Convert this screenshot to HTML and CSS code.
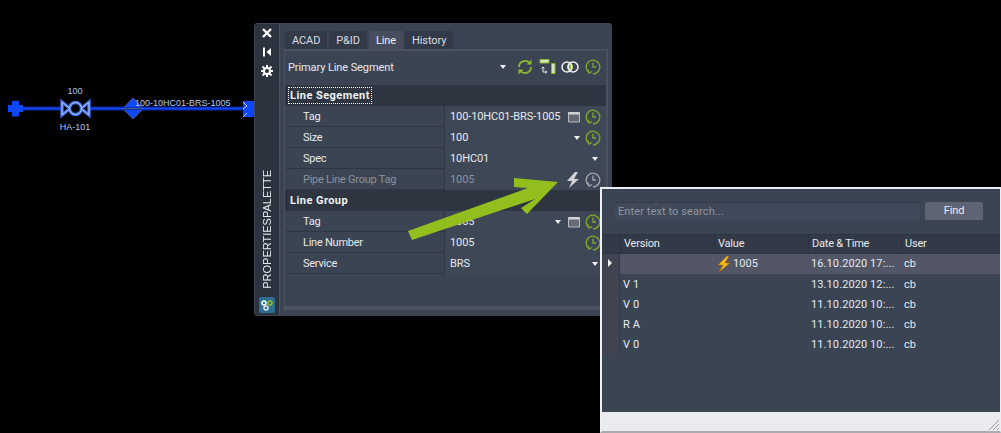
FILE: index.html
```html
<!DOCTYPE html>
<html lang="en">
<head>
    <meta charset="UTF-8">
    <title>Properties palette</title>
    <link rel="stylesheet" href="styles.css">
</head>
<body>
    <svg class="diagram" width="254" height="70" viewBox="0 70 254 70">
        <defs>
            <filter id="glow" x="-30%" y="-30%" width="160%" height="160%"><feGaussianBlur stdDeviation="0.6"/></filter>
        </defs>
        <path d="M8 108.500H254" stroke="#0a2aa0" stroke-width="4"/>
        <path d="M8 108.500H254" stroke="#1548ff" stroke-width="1.500"/>
        <path d="M12 101h7v4h4v7h-4v4.500h-7V112H8v-7h4z" fill="#0f47ff"/>
        <g fill="#000" stroke="#3a6ae6" stroke-width="3.400" filter="url(#glow)"><path d="M62 102l8 6.500-8 6.500zM89 102l-8 6.500 8 6.500z"/><circle cx="75.500" cy="108.500" r="6"/></g>
        <g fill="none" stroke="#b9ccff" stroke-width="1"><path d="M62 102l8 6.500-8 6.500zM89 102l-8 6.500 8 6.500z"/><circle cx="75.500" cy="108.500" r="6"/></g>
        <path d="M133 98l9 9h-18zM124 110h18l-9 9z" fill="#0f47ff"/>
        <path d="M124 107.500l9-9.500 9 9.500M124 109.500l9 9.500 9-9.500M124 108.500h18" fill="none" stroke="#4a5a8a" stroke-width="1"/>
        <path d="M243 101h11v16h-11z" fill="#0f47ff"/>
        <path d="M243 102l4 4-4 3M243 117l4-4" fill="none" stroke="#c8d6f6" stroke-width="1"/>
        <text class="dia-text" x="75" y="94" text-anchor="middle">100</text>
        <text class="dia-text" x="75" y="130" text-anchor="middle">HA-101</text>
        <text class="dia-text" x="135" y="106">100-10HC01-BRS-1005</text>
    </svg>

    <div class="palette">
        <div class="strip">
            <div class="strip-tools">
                <svg width="12" height="12" viewBox="0 0 12 12"><path d="M2 2l8 8M10 2l-8 8" stroke="#fff" stroke-width="2.400"/></svg>
                <svg width="12" height="12" viewBox="0 0 12 12"><path d="M3 1.500v9" stroke="#fff" stroke-width="2"/><path d="M10 2v8L5.500 6z" fill="#fff"/></svg>
                <svg width="12" height="12" viewBox="0 0 12 12"><path d="M6 0v12M0 6h12M1.500 1.500l9 9M10.500 1.500l-9 9" stroke="#fff" stroke-width="2"/><circle cx="6" cy="6" r="4" fill="#fff"/><circle cx="6" cy="6" r="2" fill="#2c333f"/></svg>
            </div>
            <div class="strip-title">PROPERTIESPALETTE</div>
            <div class="strip-logo">
                <svg width="16" height="16" viewBox="0 0 16 16"><circle cx="5" cy="6" r="2" fill="none" stroke="#fff" stroke-width="1.500"/><circle cx="11" cy="6" r="2" fill="none" stroke="#93bf1e" stroke-width="1.500"/><circle cx="7" cy="11" r="2" fill="none" stroke="#e8e8e8" stroke-width="1.500"/></svg>
            </div>
        </div>
        <div class="main">
            <div class="tabs">
                <div class="tab">ACAD</div>
                <div class="tab">P&amp;ID</div>
                <div class="tab tab-on">Line</div>
                <div class="tab">History</div>
            </div>
            <div class="body">
                <div class="toolbar">
                    <div class="select-box">
                        <span>Primary Line Segment</span>
                        <span class="caret"></span>
                    </div>
                    <svg class="tool" width="18" height="18" viewBox="0 0 18 18"><path d="M3 9a6 6 0 0 1 10.500-4M15 9a6 6 0 0 1-10.500 4" fill="none" stroke="#8cb82b" stroke-width="1.800"/><path d="M15.500 1.500v5h-5zM2.500 16.500v-5h5z" fill="#8cb82b"/></svg>
                    <svg class="tool" width="17" height="18" viewBox="0 0 17 18"><path d="M1 1.500h9v3.500H1z" fill="#d5e3c8" stroke="#8cb82b"/><path d="M12.500 5.500h3.500v10h-3.500z" fill="#d5e3c8" stroke="#8cb82b"/><path d="M4 9v5h4M2.500 10.500L4 9l1.500 1.500M6.500 12.500L8 14l-1.500 1.500" fill="none" stroke="#e8e8e8"/></svg>
                    <svg class="tool" width="18" height="18" viewBox="0 0 18 18"><path d="M9 4.500a5 5 0 0 1 0 9 5 5 0 0 1 0-9z" fill="#8cb82b"/><circle cx="6" cy="9" r="5" fill="none" stroke="#f0f0f0" stroke-width="1.500"/><circle cx="12" cy="9" r="5" fill="none" stroke="#f0f0f0" stroke-width="1.500"/></svg>
                    <svg class="tool tool-last" width="16" height="18" viewBox="0 0 16 18"><use href="#clock"/></svg>
                </div>

                <div class="section"><span class="focus">Line Segement</span></div>
                <div class="row"><div class="cell-name">Tag</div><div class="cell-val"><span class="val-text">100-10HC01-BRS-1005</span>
                    <svg class="win" width="12" height="12" viewBox="0 0 12 12"><path d="M.5 1.500h11v9.500H.5z" fill="#656b76" stroke="#b9bcc2"/><path d="M.5 1h11v2.500H.5z" fill="#d0d2d6"/></svg>
                    <svg class="clock" width="16" height="18" viewBox="0 0 16 18"><use href="#clock"/></svg></div></div>
                <div class="row"><div class="cell-name">Size</div><div class="cell-val"><span class="val-text">100</span><span class="caret"></span>
                    <svg class="clock" width="16" height="18" viewBox="0 0 16 18"><use href="#clock"/></svg></div></div>
                <div class="row"><div class="cell-name">Spec</div><div class="cell-val"><span class="val-text">10HC01</span><span class="caret caret-end"></span></div></div>
                <div class="row row-off"><div class="cell-name">Pipe Line Group Tag</div><div class="cell-val"><span class="val-text">1005</span>
                    <svg class="bolt" width="14" height="18" viewBox="0 0 14 18"><path d="M9 1L1 10h5l-3 7 10-9H8l4-7z" fill="#cfd2d6"/></svg>
                    <svg class="clock" width="16" height="18" viewBox="0 0 16 18"><use href="#clock-off"/></svg></div></div>

                <div class="section">Line Group</div>
                <div class="row"><div class="cell-name">Tag</div><div class="cell-val"><span class="val-text">1005</span><span class="caret"></span>
                    <svg class="win" width="12" height="12" viewBox="0 0 12 12"><path d="M.5 1.500h11v9.500H.5z" fill="#656b76" stroke="#b9bcc2"/><path d="M.5 1h11v2.500H.5z" fill="#d0d2d6"/></svg>
                    <svg class="clock" width="16" height="18" viewBox="0 0 16 18"><use href="#clock"/></svg></div></div>
                <div class="row"><div class="cell-name">Line Number</div><div class="cell-val"><span class="val-text">1005</span>
                    <svg class="clock" width="16" height="18" viewBox="0 0 16 18"><use href="#clock"/></svg></div></div>
                <div class="row"><div class="cell-name">Service</div><div class="cell-val"><span class="val-text">BRS</span><span class="caret caret-end"></span></div></div>
            </div>
        </div>
    </div>

    <svg class="arrow" width="160" height="72" viewBox="0 0 160 72"><path d="M8 61L128 18l-14-1V8l44 4-31 32-6-6 14-9L12 70z" fill="#93bf1e"/></svg>

    <div class="history">
        <div class="search">
            <div class="search-input">Enter text to search...</div>
            <div class="find">Find</div>
        </div>
        <div class="grid">
            <div class="grid-row grid-head">
                <div class="gutter"></div><div>Version</div><div>Value</div><div>Date &amp; Time</div><div>User</div>
            </div>
            <div class="grid-row grid-on">
                <div class="gutter"><span class="pointer"></span></div><div></div>
                <div class="val-bolt"><svg width="14" height="16" viewBox="0 0 14 16"><path d="M10 0L1 9h5l-4 7 11-9H8l4-7z" fill="#f7b90f" stroke="#a8560c" stroke-width=".5"/></svg>1005</div>
                <div>16.10.2020 17:...</div><div>cb</div>
            </div>
            <div class="grid-row"><div class="gutter"></div><div>V 1</div><div></div><div>13.10.2020 12:...</div><div>cb</div></div>
            <div class="grid-row"><div class="gutter"></div><div>V 0</div><div></div><div>11.10.2020 10:...</div><div>cb</div></div>
            <div class="grid-row"><div class="gutter"></div><div>R A</div><div></div><div>11.10.2020 10:...</div><div>cb</div></div>
            <div class="grid-row"><div class="gutter"></div><div>V 0</div><div></div><div>11.10.2020 10:...</div><div>cb</div></div>
        </div>
        <div class="status">
            <svg width="12" height="12" viewBox="0 0 12 12"><path d="M1 11L11 1M5 11l6-6M9 11l2-2" stroke="#9a9da3" stroke-width="1"/></svg>
        </div>
    </div>

    <svg width="0" height="0" class="defs">
        <defs>
            <g id="clock" fill="none" stroke="#7fa82b" stroke-width="1.300"><path d="M4 14.500a6.800 6.800 0 1 1 4 1.300"/><path d="M8 4.500V9h3"/><path d="M3 11.500l1 3.500 3.200-1.500"/></g>
            <g id="clock-off" fill="none" stroke="#a3a7ad" stroke-width="1.300"><path d="M4 14.500a6.800 6.800 0 1 1 4 1.300"/><path d="M8 4.500V9h3"/><path d="M3 11.500l1 3.500 3.200-1.500"/></g>
        </defs>
    </svg>
</body>
</html>
```

FILE: styles.css
```css
html, body {
    margin: 0;
    height: 433px;
    overflow: hidden;
    background: #000;
}
body {
    position: relative;
    font-family: Roboto, "Liberation Sans", Arial, sans-serif;
    font-size: 11px;
    letter-spacing: -0.1px;
    color: #e6e9ee;
}
.defs {
    position: absolute;
}
.diagram {
    position: absolute;
    left: 0;
    top: 70px;
}
.dia-text {
    font-family: "Liberation Sans", Arial, sans-serif;
    font-size: 9px;
    letter-spacing: 0;
    fill: #b7c8f2;
}

/* palette window */
.palette {
    position: absolute;
    left: 254px;
    top: 23px;
    width: 358px;
    height: 293px;
    display: flex;
    background: #2c333f;
    border-radius: 3px;
    box-sizing: border-box;
    border: 1px solid #3d4552;
}
.strip {
    width: 24px;
    display: flex;
    flex-direction: column;
    align-items: center;
    padding: 3px 0 2px;
    background: #2c333f;
}
.strip-tools {
    display: flex;
    flex-direction: column;
    gap: 7px;
}
.strip-tools svg {
    display: block;
}
.strip-title {
    margin-top: auto;
    writing-mode: vertical-rl;
    transform: rotate(180deg);
    font-family: "Liberation Sans", Arial, sans-serif;
    font-size: 11px;
    letter-spacing: 0;
    color: #e8ebef;
}
.strip-logo {
    margin-top: 8px;
    width: 16px;
    height: 16px;
    background: #2c6f93;
    border-radius: 2px;
}
.strip-logo svg {
    display: block;
}
.main {
    flex: 1;
    background: #3b4452;
    border-left: 1px solid #4c5462;
    padding: 7px 3px 5px 4px;
    display: flex;
    flex-direction: column;
}
.tabs {
    display: flex;
    gap: 2px;
    height: 18px;
    padding-left: 1px;
}
.tab {
    padding: 0 7px;
    line-height: 20px;
    background: #333a47;
    border-radius: 3px 3px 0 0;
    color: #d9dde3;
}
.tab-on {
    background: #474d5d;
    color: #eef0f3;
}
.body {
    flex: 1;
    border: 1px solid #4a5160;
    border-width: 2px 2px 4px 1px;
    padding: 5px 0 0;
}
.toolbar {
    display: flex;
    align-items: center;
    height: 21px;
}
.select-box {
    width: 226px;
    display: flex;
    justify-content: space-between;
    align-items: center;
    padding: 1px 5px 0 3px;
    height: 20px;
    box-sizing: border-box;
    flex-shrink: 0;
    color: #e6e9ee;
}
.tool {
    margin-left: 5px;
    flex-shrink: 0;
}
.tool-last {
    margin-left: 6px;
}
.caret {
    width: 0;
    height: 0;
    border: 3px solid transparent;
    border-top: 4px solid #f2f2f2;
    border-bottom: 0;
    display: inline-block;
}
.section {
    margin-top: 8px;
    height: 21px;
    line-height: 21px;
    background: #2e3541;
    font-weight: bold;
    letter-spacing: 0.45px;
    padding-left: 5px;
    color: #eef1f5;
}
.row + .section {
    margin-top: 0;
}
.focus {
    outline: 1px dotted #fff;
    outline-offset: 1px;
}
.row {
    display: grid;
    grid-template-columns: 159px 1fr;
    height: 21px;
    box-sizing: border-box;
    border-bottom: 1px solid #2f3642;
    margin-left: 1px;
}
.cell-name {
    padding-left: 17px;
    line-height: 21px;
    letter-spacing: -0.25px;
    border-right: 1px solid #2f3642;
}
.cell-val {
    display: flex;
    align-items: center;
    padding-left: 5px;
    padding-right: 5px;
    background: #3e4756;
    overflow: hidden;
}
.cell-val .caret {
    margin-left: auto;
}
.caret-end {
    margin-right: 3px;
}
.val-text {
    white-space: nowrap;
}
.win {
    margin-left: auto;
    flex-shrink: 0;
}
.cell-val .caret + .win {
    margin-left: 7px;
}
.clock {
    margin-left: 5px;
    flex-shrink: 0;
}
.cell-val .val-text + .clock {
    margin-left: auto;
}
.bolt {
    margin-left: auto;
    flex-shrink: 0;
}
.row-off {
    color: #8d929b;
}

.arrow {
    position: absolute;
    left: 400px;
    top: 170px;
}

/* history window */
.history {
    position: absolute;
    left: 600px;
    top: 187px;
    width: 401px;
    height: 246px;
    box-sizing: border-box;
    border: 2px solid #eceef1;
    border-width: 2px 1px 2px 2px;
    border-bottom-color: #a9abb0;
    background: #3b4452;
    display: flex;
    flex-direction: column;
}
.search {
    display: flex;
    gap: 5px;
    padding: 13px 15px 0 13px;
    height: 32px;
}
.search-input {
    width: 305px;
    height: 18px;
    box-sizing: border-box;
    padding-left: 3px;
    line-height: 17px;
    letter-spacing: 0.1px;
    background: #3f4959;
    border-top: 1px solid #333a46;
    color: #8f96a1;
}
.find {
    width: 58px;
    height: 18px;
    line-height: 18px;
    text-align: center;
    background: #5e6474;
    border-radius: 2px;
    color: #eceef1;
}
.grid {
    flex: 1;
}
.grid-row {
    display: grid;
    grid-template-columns: 18px 94px 94px 93px 1fr;
    height: 20px;
    box-sizing: border-box;
    line-height: 21px;
    letter-spacing: 0.1px;
    padding-right: 3px;
}
.grid-row > div {
    padding-left: 3px;
    white-space: nowrap;
    overflow: hidden;
}
.grid-row .gutter {
    background: #414450;
    padding-left: 6px;
    border-right: 1px solid #333a46;
}
.grid-head {
    background: #333a47;
    border-top: 1px solid #2d3440;
    border-bottom: 1px solid #2d3440;
    line-height: 18px;
    letter-spacing: -0.2px;
}
.grid-head > div {
    border-left: 1px solid #2d3440;
}
.grid-head .gutter {
    background: #333a47;
    border-left: 0;
}
.grid-on {
    background: #525666;
    line-height: 20px;
}
.pointer {
    display: inline-block;
    width: 0;
    height: 0;
    border: 4px solid transparent;
    border-left: 4px solid #f2f2f2;
    border-right: 0;
}
.val-bolt {
    display: flex;
    align-items: center;
    gap: 2px;
}
.status {
    height: 19px;
    background: #e9ebee;
    display: flex;
    justify-content: flex-end;
    align-items: flex-end;
}
.status svg {
    display: block;
}
```
